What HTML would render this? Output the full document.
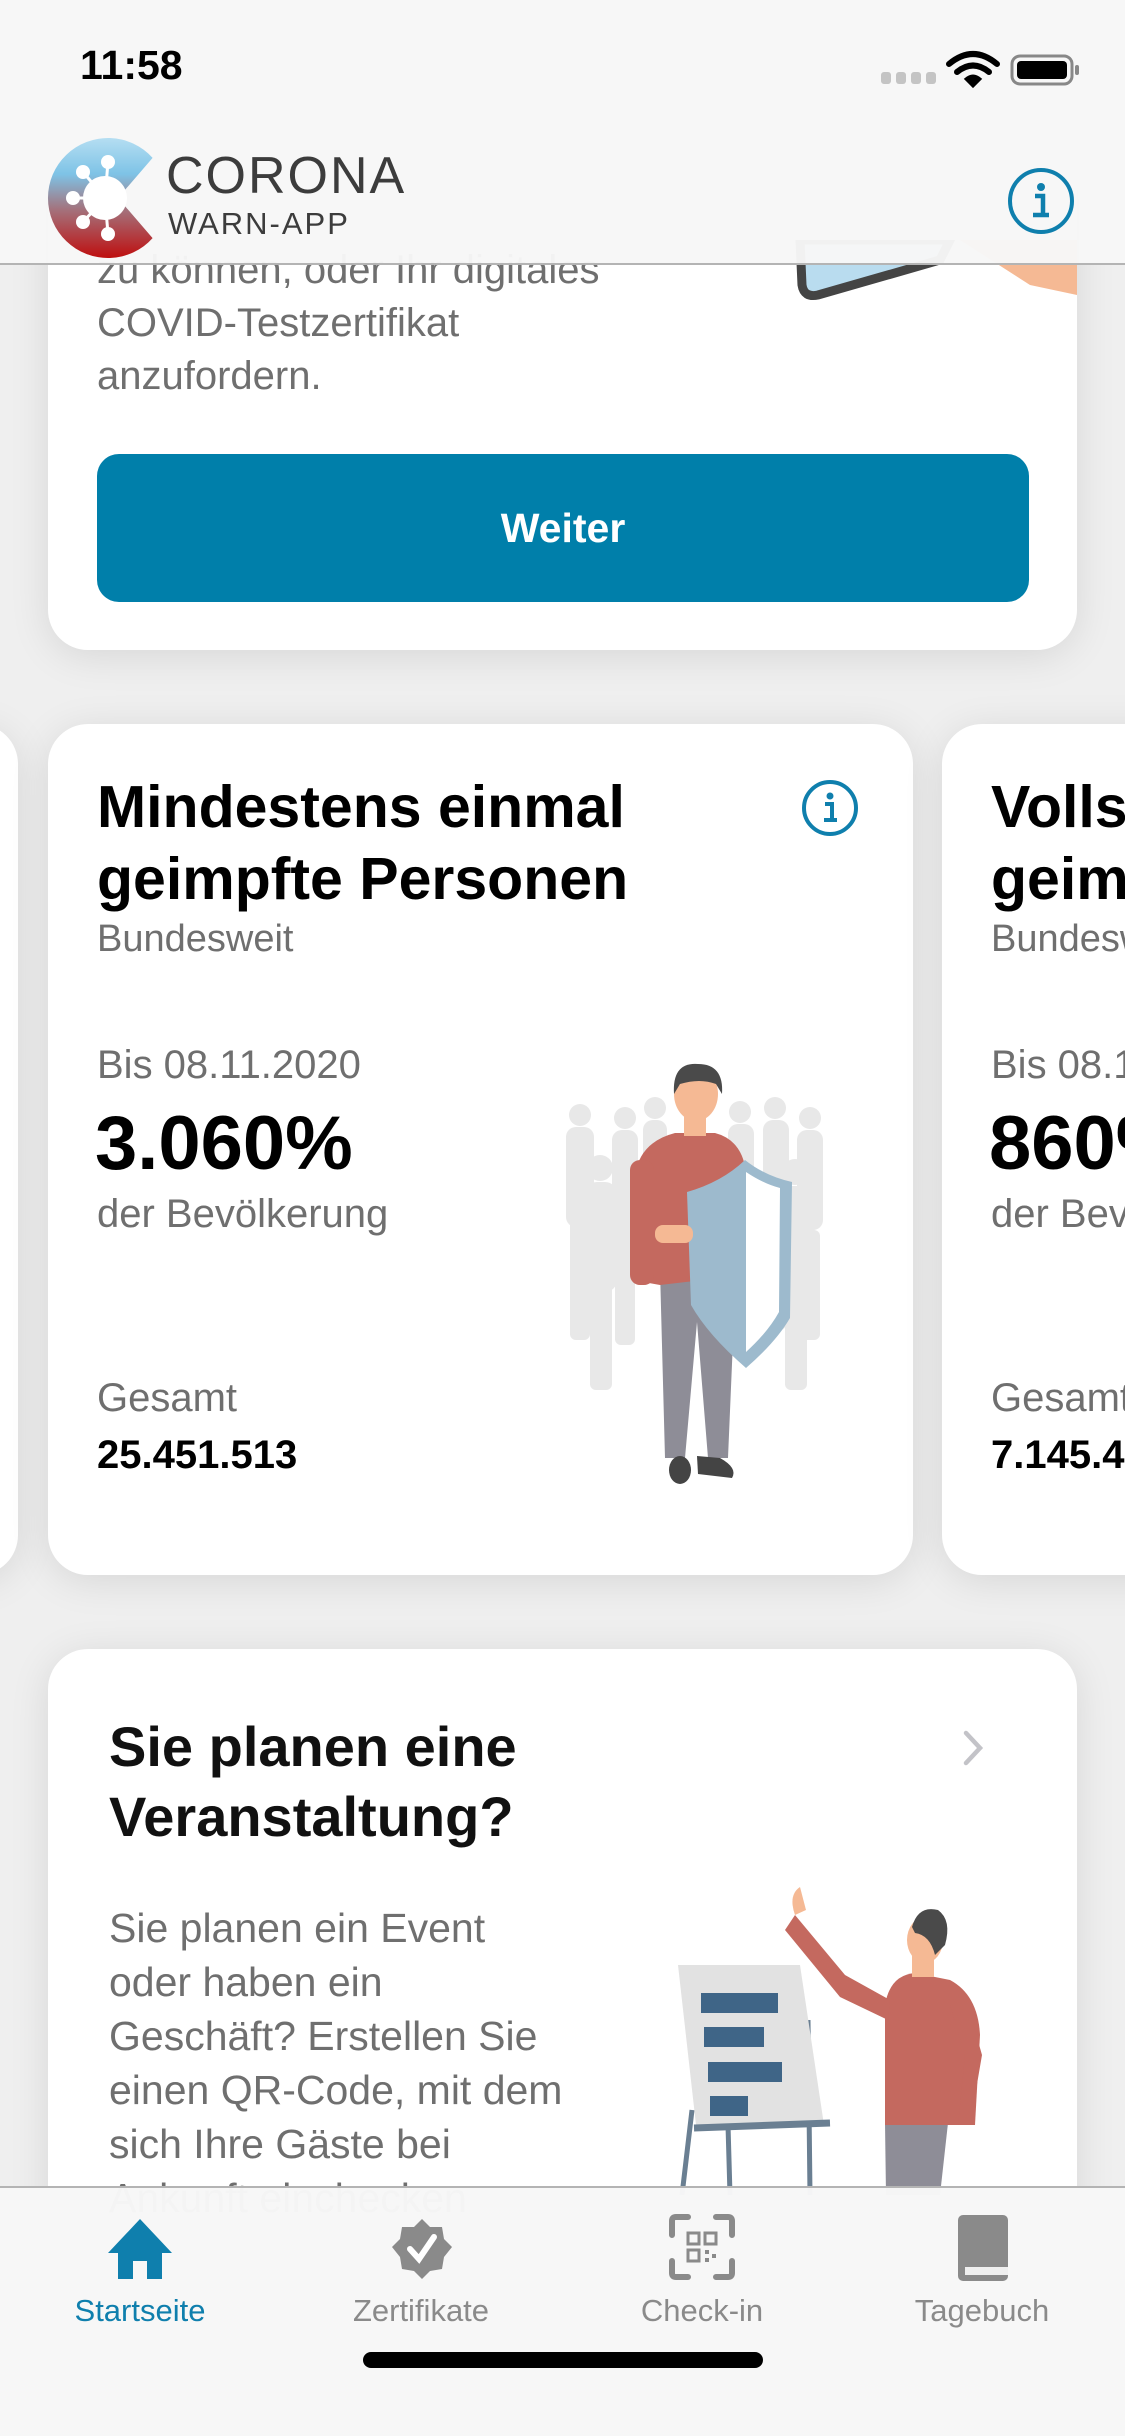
<!DOCTYPE html>
<html><head><meta charset="utf-8"><style>
*{margin:0;padding:0;box-sizing:border-box}
html,body{width:1125px;height:2436px;overflow:hidden}
body{background:#efefef;font-family:"Liberation Sans",sans-serif}
#w{position:relative;width:1125px;height:2436px;overflow:hidden}
.abs{position:absolute}
.card{position:absolute;background:#fff;border-radius:40px;box-shadow:0 6px 40px rgba(0,0,0,0.10)}
.t{position:absolute;white-space:nowrap}
.g{color:#6f6f6f}
.tl{position:absolute;top:2293px;width:240px;text-align:center;font-size:31px;color:#8a8a8a}
</style></head><body><div id="w">

<!-- top card -->
<div class="card" style="left:48px;top:140px;width:1029px;height:510px"></div>
<div class="t g" style="left:97px;top:244px;font-size:40px;line-height:53px">zu können, oder Ihr digitales<br>COVID-Testzertifikat<br>anzufordern.</div>
<svg class="abs" style="left:790px;top:240px" width="287" height="70"><path d="M10 0 L12 45 Q14 58 28 55 L150 20 L160 0Z" fill="#b9dcef" stroke="#444" stroke-width="9"/><path d="M170 0 L287 0 L287 55 L240 45 Z" fill="#f5b994"/></svg>
<div class="abs" style="left:97px;top:454px;width:932px;height:148px;background:#007faa;border-radius:22px;color:#fff;font-size:41px;font-weight:bold;text-align:center;line-height:148px">Weiter</div>

<!-- stats cards -->
<div class="card" style="left:-100px;top:724px;width:118px;height:851px"></div>
<div class="card" style="left:48px;top:724px;width:865px;height:851px"></div>
<div class="card" style="left:942px;top:724px;width:400px;height:851px"></div>

<div class="t" style="left:97px;top:771px;font-size:59px;font-weight:bold;line-height:72px;color:#000">Mindestens einmal<br>geimpfte Personen</div>
<div class="t g" style="left:97px;top:918px;font-size:38px">Bundesweit</div>
<div class="t g" style="left:97px;top:1043px;font-size:40px">Bis 08.11.2020</div>
<div class="t" style="left:95px;top:1100px;font-size:76px;font-weight:bold;color:#000">3.060%</div>
<div class="t g" style="left:97px;top:1192px;font-size:40px">der Bevölkerung</div>
<div class="t g" style="left:97px;top:1376px;font-size:40px">Gesamt</div>
<div class="t" style="left:97px;top:1433px;font-size:40px;font-weight:bold;color:#000">25.451.513</div>
<svg class="abs" style="left:800px;top:780px" width="60" height="60"><circle cx="30" cy="28" r="26" fill="none" stroke="#0f7fad" stroke-width="4"/><circle cx="30" cy="16" r="3.5" fill="#0f7fad"/><path d="M25 24h7v16M24 40h13" stroke="#0f7fad" stroke-width="4" fill="none"/></svg>

<div class="t" style="left:991px;top:771px;font-size:59px;font-weight:bold;line-height:72px;color:#000">Vollständig<br>geimpfte</div>
<div class="t g" style="left:991px;top:918px;font-size:38px">Bundesweit</div>
<div class="t g" style="left:991px;top:1043px;font-size:40px">Bis 08.11.2020</div>
<div class="t" style="left:989px;top:1100px;font-size:76px;font-weight:bold;color:#000">860%</div>
<div class="t g" style="left:991px;top:1192px;font-size:40px">der Bevölkerung</div>
<div class="t g" style="left:991px;top:1376px;font-size:40px">Gesamt</div>
<div class="t" style="left:991px;top:1433px;font-size:40px;font-weight:bold;color:#000">7.145.456</div>

<!-- vaccination illustration -->
<svg class="abs" style="left:550px;top:1060px" width="300" height="450">
<g fill="#e8e8e8">
<circle cx="30" cy="55" r="11"/><rect x="16" y="67" width="28" height="100" rx="10"/><rect x="20" y="160" width="20" height="120" rx="6"/>
<circle cx="75" cy="58" r="11"/><rect x="62" y="70" width="26" height="100" rx="10"/><rect x="65" y="165" width="20" height="120" rx="6"/>
<circle cx="105" cy="48" r="11"/><rect x="93" y="60" width="24" height="90" rx="10"/>
<circle cx="190" cy="52" r="11"/><rect x="178" y="64" width="26" height="100" rx="10"/><rect x="181" y="160" width="20" height="110" rx="6"/>
<circle cx="225" cy="48" r="11"/><rect x="213" y="60" width="26" height="100" rx="10"/><rect x="216" y="160" width="20" height="110" rx="6"/>
<circle cx="260" cy="58" r="11"/><rect x="247" y="70" width="26" height="100" rx="10"/><rect x="250" y="170" width="20" height="110" rx="6"/>
<circle cx="50" cy="108" r="13"/><rect x="35" y="122" width="32" height="110" rx="12"/><rect x="40" y="225" width="22" height="105" rx="6"/>
<circle cx="245" cy="112" r="13"/><rect x="230" y="126" width="32" height="110" rx="12"/><rect x="235" y="230" width="22" height="100" rx="6"/>
</g>
<path d="M110 210 L115 398 L135 398 L147 262 L158 398 L178 398 L186 210Z" fill="#8e8d97"/>
<path d="M82 220 L85 115 Q90 82 125 73 L165 73 Q192 80 196 112 L196 215 L110 225Z" fill="#c4695f"/>
<rect x="80" y="100" width="24" height="125" rx="10" fill="#c4695f"/>
<rect x="134" y="52" width="22" height="24" fill="#f5b994"/>
<ellipse cx="146" cy="34" rx="22" ry="27" fill="#f5b994"/>
<path d="M124 34 Q122 2 148 4 Q174 4 172 34 L166 24 Q150 18 130 24 Z" fill="#4a4a4a"/>
<path d="M137 132 Q172 122 195 100 Q215 116 242 122 L240 258 Q226 282 196 308 Q158 275 141 245 Z" fill="#9dbacd"/>
<path d="M196 112 Q214 124 230 128 L229 252 Q218 272 196 292 Z" fill="#fff"/>
<rect x="105" y="165" width="38" height="18" rx="8" fill="#f5b994"/>
<ellipse cx="130" cy="410" rx="11" ry="14" fill="#444"/>
<path d="M147 396 L170 398 Q188 408 182 418 L148 414Z" fill="#444"/>
</svg>

<!-- event card -->
<div class="card" style="left:48px;top:1649px;width:1029px;height:820px"></div>
<div class="t" style="left:109px;top:1712px;font-size:56px;font-weight:bold;line-height:70px;color:#111">Sie planen eine<br>Veranstaltung?</div>
<svg class="abs" style="left:958px;top:1728px" width="30" height="40"><path d="M8 5 L22 20 L8 35" fill="none" stroke="#c3c3c8" stroke-width="4.5" stroke-linecap="round"/></svg>
<div class="t g" style="left:109px;top:1901px;font-size:41px;line-height:54px">Sie planen ein Event<br>oder haben ein<br>Geschäft? Erstellen Sie<br>einen QR-Code, mit dem<br>sich Ihre Gäste bei<br>Ankunft einchecken</div>
<svg class="abs" style="left:660px;top:1885px" width="330" height="310">
<path d="M32 225 L22 310 M65 135 L70 310 M148 135 L150 310" stroke="#6a7f92" stroke-width="5"/>
<path d="M18 80 L140 80 L164 240 L36 240 Z" fill="#e2e2e2"/>
<path d="M34 243 L170 238" stroke="#6a7f92" stroke-width="7"/>
<rect x="41" y="108" width="77" height="20" fill="#3f6587"/>
<rect x="44" y="142" width="60" height="20" fill="#3f6587"/>
<rect x="48" y="177" width="74" height="20" fill="#3f6587"/>
<rect x="50" y="211" width="38" height="20" fill="#3f6587"/>
<path d="M225 238 L226 310 L280 310 L288 238Z" fill="#8e8d97"/>
<path d="M225 120 Q230 90 255 88 L290 95 Q318 110 320 150 L315 240 L225 240 Z" fill="#c4695f"/>
<path d="M135 30 L185 90 L230 115 L228 135 L180 112 L125 45Z" fill="#c4695f"/>
<path d="M135 30 Q128 10 140 2 L146 25Z" fill="#f5b994"/>
<path d="M305 110 L322 170 L310 240 L298 240 L305 170 L290 120Z" fill="#c4695f"/>
<rect x="252" y="70" width="22" height="22" fill="#f5b994"/>
<ellipse cx="265" cy="55" rx="18" ry="23" fill="#f5b994"/>
<path d="M252 42 Q258 20 278 25 Q292 35 285 60 L275 70 Q270 50 255 48Z" fill="#4a4a4a"/>
</svg>

<!-- header -->
<div class="abs" style="left:0;top:0;width:1125px;height:265px;background:rgba(247,247,247,0.97);border-bottom:2px solid #b4b4b4"></div>
<div class="t" style="left:80px;top:42px;font-size:41px;font-weight:bold;color:#000">11:58</div>
<svg class="abs" style="left:875px;top:48px" width="215" height="45">
<g fill="#c4c4c4"><rect x="6" y="24" width="10" height="12" rx="3"/><rect x="21" y="24" width="10" height="12" rx="3"/><rect x="36" y="24" width="10" height="12" rx="3"/><rect x="51" y="24" width="10" height="12" rx="3"/></g>
<path d="M74 16 Q98 -4 122 16" stroke="#000" stroke-width="6" fill="none" stroke-linecap="round"/>
<path d="M82 24 Q98 11 114 24" stroke="#000" stroke-width="6" fill="none" stroke-linecap="round"/>
<path d="M91 31 L98 38 L105 31 Q98 25 91 31Z" fill="#000" stroke="#000" stroke-width="3"/>
<rect x="137" y="8" width="60" height="28" rx="8" fill="none" stroke="#888" stroke-width="3"/>
<rect x="142" y="13" width="50" height="18" rx="4" fill="#000"/>
<rect x="200" y="17" width="4" height="10" rx="2" fill="#888"/>
</svg>
<svg class="abs" style="left:40px;top:130px" width="130" height="140">
<defs><linearGradient id="lg" x1="0" y1="0" x2="0" y2="1"><stop offset="0" stop-color="#b5def2"/><stop offset="0.3" stop-color="#7ec3e6"/><stop offset="0.6" stop-color="#a4717b"/><stop offset="1" stop-color="#be0f0f"/></linearGradient></defs>
<path d="M112.6 27.9 A60 60 0 1 0 112.6 108.1 L78 68 Z" fill="url(#lg)"/>
<circle cx="65" cy="68" r="22" fill="#fff"/>
<g stroke="#fff" stroke-width="3"><path d="M65 68 L68 32 M65 68 L43 42 M65 68 L33 68 M65 68 L43 92 M65 68 L68 104"/></g>
<g fill="#fff"><circle cx="68" cy="32" r="7"/><circle cx="43" cy="42" r="7"/><circle cx="33" cy="68" r="7"/><circle cx="43" cy="92" r="7"/><circle cx="68" cy="104" r="7"/></g>
</svg>
<div class="t" style="left:166px;top:146px;font-size:52px;color:#3c3c3c;letter-spacing:2px">CORONA</div>
<div class="t" style="left:168px;top:206px;font-size:31px;color:#3c3c3c;letter-spacing:2px">WARN-APP</div>
<svg class="abs" style="left:1005px;top:165px" width="72" height="72"><circle cx="36" cy="36" r="31" fill="none" stroke="#0f7fad" stroke-width="4"/><circle cx="36" cy="22" r="4" fill="#0f7fad"/><path d="M30 31h8v19M28 50h16" stroke="#0f7fad" stroke-width="4.5" fill="none"/></svg>

<!-- tab bar -->
<div class="abs" style="left:0;top:2186px;width:1125px;height:250px;background:rgba(247,247,247,0.98);border-top:2px solid #b4b4b4"></div>
<svg class="abs" style="left:105px;top:2215px" width="70" height="70"><path d="M35 4 L3 38 L13 38 L13 64 L28 64 L28 46 L42 46 L42 64 L57 64 L57 38 L67 38 Z" fill="#0f7fad"/></svg>
<svg class="abs" style="left:390px;top:2215px" width="64" height="70"><path d="M32 4 L40 12 L52 12 L54 24 L62 32 L54 42 L52 54 L40 56 L32 64 L24 56 L12 54 L10 42 L2 32 L10 24 L12 12 L24 12Z" fill="#8a8a8a"/><path d="M20 34 L29 44 L44 22" stroke="#fff" stroke-width="6" fill="none" stroke-linecap="round"/></svg>
<svg class="abs" style="left:668px;top:2213px" width="68" height="70"><g stroke="#8a8a8a" stroke-width="6" fill="none" stroke-linecap="round"><path d="M4 22 V8 Q4 4 8 4 H20 M48 4 H60 Q64 4 64 8 V22 M64 48 V60 Q64 64 60 64 H48 M20 64 H8 Q4 64 4 60 V48"/></g><g fill="none" stroke="#8a8a8a" stroke-width="3"><rect x="20" y="20" width="11" height="11"/><rect x="37" y="20" width="11" height="11"/><rect x="20" y="37" width="11" height="11"/></g><g fill="#8a8a8a"><rect x="37" y="37" width="4" height="4"/><rect x="44" y="41" width="4" height="4"/><rect x="37" y="45" width="4" height="4"/></g></svg>
<svg class="abs" style="left:955px;top:2213px" width="56" height="72"><rect x="3" y="2" width="50" height="66" rx="5" fill="#8a8a8a"/><rect x="10" y="54" width="43" height="8" fill="#efefef"/></svg>
<div class="tl" style="left:20px;color:#0f7fad">Startseite</div>
<div class="tl" style="left:301px">Zertifikate</div>
<div class="tl" style="left:582px">Check-in</div>
<div class="tl" style="left:862px">Tagebuch</div>
<div class="abs" style="left:363px;top:2352px;width:400px;height:16px;border-radius:8px;background:#000"></div>
</div></body></html>
